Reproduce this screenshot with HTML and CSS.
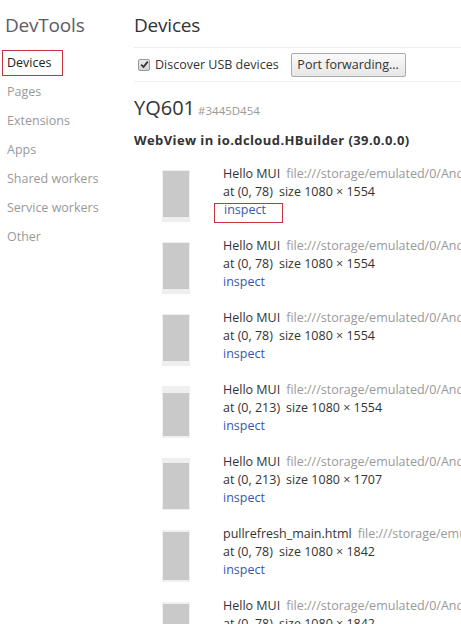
FILE: index.html
```html
<!DOCTYPE html>
<html>
<head>
<meta charset="utf-8">
<link rel="stylesheet" href="styles.css">
</head>
<body>
<div class="page">
  <nav class="sidebar">
    <h1 class="brand">DevTools</h1>
    <ul class="nav">
      <li class="nav-item active"><span class="hl-box">Devices</span></li>
      <li class="nav-item">Pages</li>
      <li class="nav-item">Extensions</li>
      <li class="nav-item">Apps</li>
      <li class="nav-item">Shared workers</li>
      <li class="nav-item">Service workers</li>
      <li class="nav-item">Other</li>
    </ul>
  </nav>
  <main class="content">
    <h2 class="page-title">Devices</h2>
    <div class="toolbar">
      <label class="check"><span class="checkbox"><svg width="9" height="9" viewBox="0 0 9 9"><path d="M1.2 4.6 L3.5 7 L7.8 1.6" fill="none" stroke="#333" stroke-width="1.8"/></svg></span>Discover USB devices</label>
      <button class="btn">Port forwarding...</button>
    </div>
    <div class="device">
      <span class="device-name">YQ601</span><span class="device-serial">#3445D454</span>
    </div>
    <div class="browser">WebView in io.dcloud.HBuilder (39.0.0.0)</div>
    <div class="list">
      <div class="row">
        <div class="thumb"><div class="screen s-78"></div></div>
        <div class="info">
          <div class="line"><span class="name">Hello MUI</span><span class="url">file:///storage/emulated/0/Android/data/io.dcloud.HBuilder</span></div>
          <div class="line">at (0, 78)<span class="size">size 1080 × 1554</span></div>
          <div class="line"><span class="link hl-link">inspect</span></div>
        </div>
      </div>
      <div class="row">
        <div class="thumb"><div class="screen s-78"></div></div>
        <div class="info">
          <div class="line"><span class="name">Hello MUI</span><span class="url">file:///storage/emulated/0/Android/data/io.dcloud.HBuilder</span></div>
          <div class="line">at (0, 78)<span class="size">size 1080 × 1554</span></div>
          <div class="line"><span class="link">inspect</span></div>
        </div>
      </div>
      <div class="row">
        <div class="thumb"><div class="screen s-78"></div></div>
        <div class="info">
          <div class="line"><span class="name">Hello MUI</span><span class="url">file:///storage/emulated/0/Android/data/io.dcloud.HBuilder</span></div>
          <div class="line">at (0, 78)<span class="size">size 1080 × 1554</span></div>
          <div class="line"><span class="link">inspect</span></div>
        </div>
      </div>
      <div class="row">
        <div class="thumb"><div class="screen s-213"></div></div>
        <div class="info">
          <div class="line"><span class="name">Hello MUI</span><span class="url">file:///storage/emulated/0/Android/data/io.dcloud.HBuilder</span></div>
          <div class="line">at (0, 213)<span class="size">size 1080 × 1554</span></div>
          <div class="line"><span class="link">inspect</span></div>
        </div>
      </div>
      <div class="row">
        <div class="thumb"><div class="screen s-213b"></div></div>
        <div class="info">
          <div class="line"><span class="name">Hello MUI</span><span class="url">file:///storage/emulated/0/Android/data/io.dcloud.HBuilder</span></div>
          <div class="line">at (0, 213)<span class="size">size 1080 × 1707</span></div>
          <div class="line"><span class="link">inspect</span></div>
        </div>
      </div>
      <div class="row">
        <div class="thumb"><div class="screen s-78b"></div></div>
        <div class="info">
          <div class="line"><span class="name">pullrefresh_main.html</span><span class="url">file:///storage/emulated/0/Android/data/io.dcloud.HBuilder</span></div>
          <div class="line">at (0, 78)<span class="size">size 1080 × 1842</span></div>
          <div class="line"><span class="link">inspect</span></div>
        </div>
      </div>
      <div class="row">
        <div class="thumb"><div class="screen s-78b"></div></div>
        <div class="info">
          <div class="line"><span class="name">Hello MUI</span><span class="url">file:///storage/emulated/0/Android/data/io.dcloud.HBuilder</span></div>
          <div class="line">at (0, 78)<span class="size">size 1080 × 1842</span></div>
          <div class="line"><span class="link">inspect</span></div>
        </div>
      </div>
    </div>
  </main>
</div>
</body>
</html>
```
FILE: styles.css
```css
html, body {
  margin: 0;
  padding: 0;
  background: #fff;
  overflow: hidden;
}
body {
  font-family: "Open Sans", "Noto Sans", sans-serif;
  font-size: 12.5px;
  color: #333;
}
.page {
  display: flex;
  width: 461px;
  height: 624px;
  overflow: hidden;
}
.sidebar {
  width: 134px;
  flex: none;
}
.brand {
  margin: 11px 0 0 5px;
  font-size: 19px;
  letter-spacing: -0.2px;
  font-weight: normal;
  color: #5c5c64;
  line-height: 28px;
}
.nav {
  list-style: none;
  margin: 9px 0 0 0;
  padding: 0;
}
.nav-item {
  height: 29px;
  line-height: 29px;
  padding-left: 7px;
  color: #999;
  font-size: 12.5px;
}
.nav-item.active {
  color: #222;
}
.hl-box {
  display: inline-block;
  margin-left: -5px;
  padding: 0 5px 0 4px;
  line-height: 24px;
  border: 1px solid #c8323c;
  width: 50px;
}
.content {
  flex: 1;
  min-width: 0;
  white-space: nowrap;
  overflow: hidden;
}
.page-title {
  margin: 11px 0 0 0;
  font-size: 19px;
  letter-spacing: -0.2px;
  font-weight: normal;
  color: #333;
  line-height: 28px;
  padding-bottom: 8px;
  border-bottom: 1px solid #eee;
}
.toolbar {
  display: flex;
  align-items: center;
  height: 33px;
  border-bottom: 1px solid #eee;
  padding-left: 4px;
}
.check {
  display: flex;
  align-items: center;
  font-size: 12.5px;
  color: #333;
}
.checkbox {
  display: inline-flex;
  align-items: center;
  justify-content: center;
  width: 10px;
  height: 10px;
  border: 1px solid #999;
  border-radius: 2px;
  background: linear-gradient(#e8e8e8, #d6d6d6);
  margin-right: 5px;
}
.btn {
  margin-left: 12px;
  height: 24px;
  width: 115px;
  padding: 0;
  font-family: inherit;
  font-size: 12.5px;
  color: #333;
  border: 1px solid #aaa;
  border-radius: 2px;
  background: linear-gradient(#fafafa, #e6e6e6);
}
.device {
  margin-top: 13px;
  display: flex;
  align-items: baseline;
}
.device-name {
  font-size: 20px;
  color: #333;
  line-height: 26px;
}
.device-serial {
  font-size: 11.5px;
  color: #999;
  margin-left: 3px;
}
.browser {
  margin-top: 10px;
  font-weight: bold;
  font-size: 13px;
  letter-spacing: 0.4px;
  color: #333;
  line-height: 18px;
}
.list {
  margin-top: 16px;
}
.row {
  display: flex;
  height: 54px;
  margin-bottom: 18px;
}
.thumb {
  width: 28px;
  height: 52px;
  margin: 5px 0 0 28px;
  background: #efefef;
  flex: none;
  display: flex;
  flex-direction: column;
}
.screen {
  background: #c9c9c9;
  margin: 1px 1px 0 1px;
}
.s-78 { height: 46px; margin-top: 1px; }
.s-78b { height: 48px; margin-top: 2px; }
.s-213 { height: 43px; margin-top: 7px; }
.s-213b { height: 46px; margin-top: 5px; }
.info {
  margin-left: 33px;
  line-height: 18px;
  font-size: 12.5px;
  color: #333;
}
.url {
  color: #999;
  margin-left: 6px;
}
.size {
  margin-left: 6px;
}
.link {
  color: #3a58a8;
}
.hl-link {
  display: inline-block;
  margin-left: -9px;
  padding-left: 9px;
  width: 58px;
  height: 18px;
  border: 1px solid #c8323c;
  line-height: 12px;
}
```
